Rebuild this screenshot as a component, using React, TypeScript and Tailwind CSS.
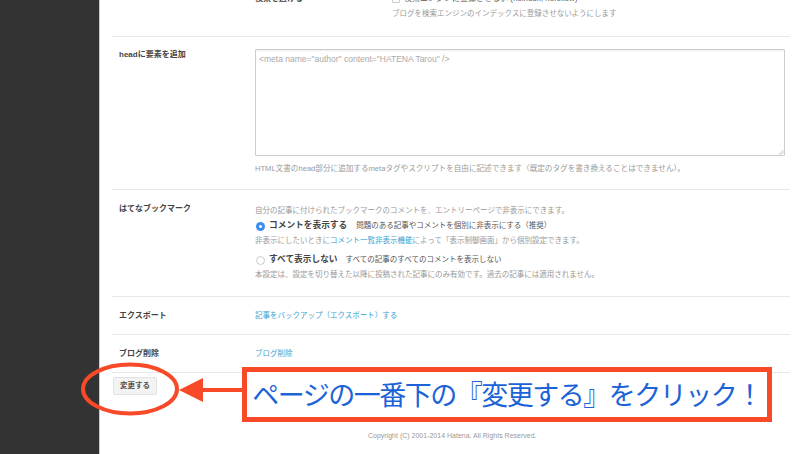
export default function App() {
  return (
    <div className="relative flex h-[454px] w-[800px] overflow-hidden bg-white font-['Liberation_Sans','Noto_Sans_CJK_JP',sans-serif] text-[7.5px] text-[#999]">
      <div className="w-[100px] shrink-0 border-r border-[#ccc] bg-[#333]" />
      <div className="flex w-[700px] flex-col pl-[12px] pr-[10px]">
        <div className="flex h-[37px] shrink-0 border-b border-[#e8e8e8] pl-[143px]">
          <div className="-mt-[7px] w-[137px] shrink-0 text-[8px] font-bold leading-[12px] text-[#444]">検索を避ける</div>
          <div className="-mt-[7px] flex flex-col">
            <div className="flex h-[12px] items-center text-[8px] text-[#666]">
              <span className="mr-[4px] inline-block h-[8px] w-[8px] rounded-[1px] border border-[#ccc] bg-white" />
              検索エンジンに登録させない (noindex, nofollow)
            </div>
            <div className="mt-[3px] leading-[12px]">ブログを検索エンジンのインデックスに登録させないようにします</div>
          </div>
        </div>
        <div className="flex h-[153px] shrink-0 border-b border-[#e8e8e8] pl-[7px]">
          <div className="w-[136px] shrink-0 pt-[12px] text-[8px] font-bold leading-[12px] text-[#444]">headに要素を追加</div>
          <div className="pt-[12px]">
            <div className="relative h-[107px] w-[530px] rounded-[1px] border border-[#ccc] px-[3px] py-[2px] text-[8.5px] leading-[14px] text-[#aaa] shadow-[inset_0_1px_1px_rgba(0,0,0,0.06)]">
              {'<meta name="author" content="HATENA Tarou" />'}
              <svg className="absolute bottom-0 right-0 h-[6px] w-[6px]" viewBox="0 0 6 6" fill="none" stroke="#999" strokeWidth="0.6"><path d="M1 5.5 5.5 1M3.2 5.5 5.5 3.2" /></svg>
            </div>
            <div className="mt-[7px] text-[7.6px] leading-[12px]">HTML文書のhead部分に追加するmetaタグやスクリプトを自由に記述できます（既定のタグを書き換えることはできません）。</div>
          </div>
        </div>
        <div className="flex h-[107px] shrink-0 border-b border-[#e8e8e8] pl-[7px]">
          <div className="w-[136px] shrink-0 pt-[13px] text-[8px] font-bold leading-[12px] text-[#444]">はてなブックマーク</div>
          <div className="pt-[15px]">
            <div className="leading-[12px]">自分の記事に付けられたブックマークのコメントを、エントリーページで非表示にできます。</div>
            <div className="mt-[2px] flex h-[14px] items-center">
              <span className="ml-[1px] mr-[4px] flex h-[9px] w-[9px] items-center justify-center rounded-full bg-[#3b8ef0]"><span className="h-[3px] w-[3px] rounded-full bg-white" /></span>
              <span className="mr-[9px] text-[8.7px] font-bold text-[#444]">コメントを表示する</span>
              <span className="text-[#555]">問題のある記事やコメントを個別に非表示にする（推奨）</span>
            </div>
            <div className="mt-[2px] leading-[12px]">非表示にしたいときに<span className="text-[#3a9fd0]">コメント一覧非表示機能</span>によって「表示制御画面」から個別設定できます。</div>
            <div className="mt-[6px] flex h-[14px] items-center">
              <span className="ml-[1px] mr-[4px] h-[9px] w-[9px] rounded-full border border-[#ccc] bg-white" />
              <span className="mr-[8px] text-[8.7px] font-bold text-[#444]">すべて表示しない</span>
              <span className="text-[#555]">すべての記事のすべてのコメントを表示しない</span>
            </div>
            <div className="mt-[2px] leading-[12px]">本設定は、設定を切り替えた以降に投稿された記事にのみ有効です。過去の記事には適用されません。</div>
          </div>
        </div>
        <div className="flex h-[38px] shrink-0 items-center border-b border-[#e8e8e8] pl-[7px]">
          <div className="w-[136px] shrink-0 text-[8px] font-bold text-[#444]">エクスポート</div>
          <div className="text-[#3a9fd0]">記事をバックアップ（エクスポート）する</div>
        </div>
        <div className="flex h-[38px] shrink-0 items-center border-b border-[#e8e8e8] pl-[7px]">
          <div className="w-[136px] shrink-0 text-[8px] font-bold text-[#444]">ブログ削除</div>
          <div className="text-[#3a9fd0]">ブログ削除</div>
        </div>
        <div className="pl-[1px] pt-[4px]">
          <button className="h-[18px] w-[44px] rounded-[2px] border border-[#e2e2e2] bg-[#f3f3f3] text-[7.5px] font-bold text-[#555]">変更する</button>
        </div>
        <div className="mt-[36px] pl-[256px] text-[7px] leading-[10px] text-[#999]">Copyright (C) 2001-2014 Hatena. All Rights Reserved.</div>
      </div>

      <svg className="absolute left-[75px] top-[355px] h-[70px] w-[175px]" viewBox="0 0 175 70" fill="none">
        <ellipse cx="55" cy="34" rx="47" ry="24.5" stroke="#f84a28" strokeWidth="4" />
        <path d="M104 35 L128 23 V47 Z" fill="#f84a28" />
        <path d="M126 35 H170" stroke="#f84a28" strokeWidth="4" />
      </svg>
      <div className="absolute left-[242px] top-[367px] flex h-[55px] w-[530px] items-center justify-center border-[5px] border-[#f84a28] bg-white pt-[3px]">
        <span className="whitespace-nowrap text-[27px] font-normal leading-none tracking-[-1.5px] text-[#1c63d8]">ページの一番下の『変更する』をクリック！</span>
      </div>
    </div>
  );
}
